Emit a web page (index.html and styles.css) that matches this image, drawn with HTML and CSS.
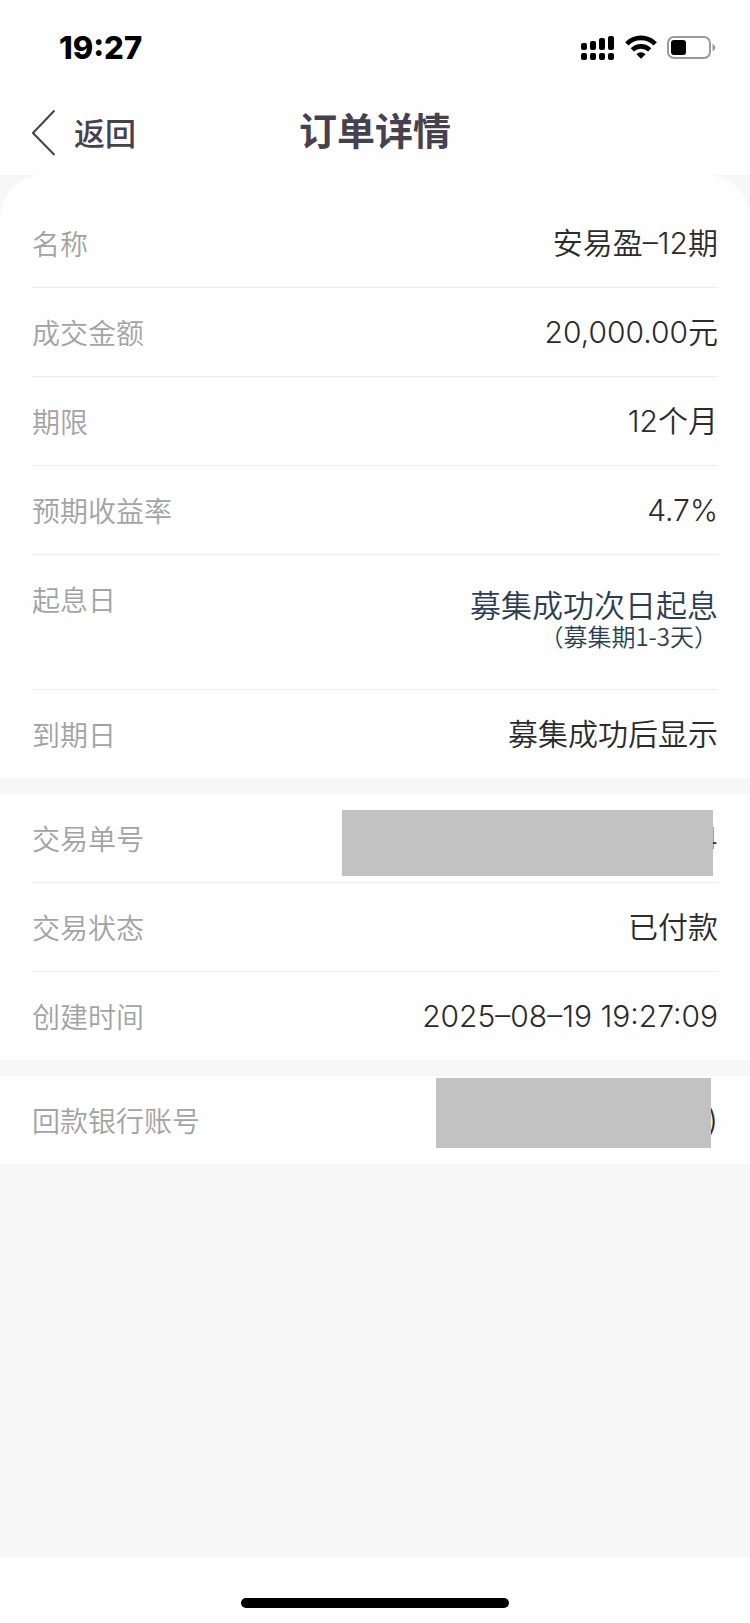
FILE: index.html
```html
<!DOCTYPE html>
<html lang="zh-CN">
<head>
<meta charset="utf-8">
<meta name="viewport" content="width=device-width, initial-scale=1">
<title>订单详情</title>
<link rel="stylesheet" href="styles.css">
</head>
<body>
<div class="status-bar">
  <span class="clock">19:27</span>
  <div class="status-icons">
    <svg width="34" height="26" viewBox="0 0 34 26" aria-hidden="true">
      <rect x="0" y="8" width="6" height="7" rx="2"/>
      <rect x="9" y="6" width="6" height="9" rx="2"/>
      <rect x="18" y="3" width="6" height="12" rx="2"/>
      <rect x="27" y="1" width="6" height="14" rx="2"/>
      <rect x="0" y="18" width="6" height="7" rx="2"/>
      <rect x="9" y="18" width="6" height="7" rx="2"/>
      <rect x="18" y="18" width="6" height="7" rx="2"/>
      <rect x="27" y="18" width="6" height="7" rx="2"/>
    </svg>
    <svg width="32" height="26" viewBox="0 0 32 26" aria-hidden="true">
      <g fill="none" stroke="#000" stroke-width="4.6">
        <path d="M1.800 8.800a20 20 0 0 1 28.400 0"/>
        <path d="M7.300 14.900a12.400 12.400 0 0 1 17.400 0"/>
      </g>
      <path d="M16 23.800l-4.600-4.600a6.600 6.600 0 0 1 9.200 0z"/>
    </svg>
    <svg width="49" height="26" viewBox="0 0 49 26" aria-hidden="true">
      <rect x="1" y="2" width="42" height="21" rx="6" fill="none" stroke="#999" stroke-width="2"/>
      <rect x="4" y="5" width="15" height="15" rx="3"/>
      <path d="M45.500 9c2 .6 2.800 2 2.800 3.500s-.8 2.900-2.800 3.500z" fill="#999"/>
    </svg>
  </div>
</div>
<header class="nav">
  <button class="back" type="button">
    <svg width="24" height="48" viewBox="0 0 24 48" fill="none" stroke="#45414f" stroke-width="2" aria-hidden="true"><path d="M22.500 2.500L1 25l21.500 22"/></svg>
    <span>返回</span>
  </button>
  <h1 class="title">订单详情</h1>
</header>
<main class="content">
  <dl class="card card-first">
    <div class="row"><dt>名称</dt><dd>安易盈–12期</dd></div>
    <div class="row"><dt>成交金额</dt><dd>20,000.00元</dd></div>
    <div class="row"><dt>期限</dt><dd>12个月</dd></div>
    <div class="row"><dt>预期收益率</dt><dd>4.7%</dd></div>
    <div class="row row-tall"><dt>起息日</dt><dd class="accrual"><span>募集成功次日起息</span><small>（募集期1-3天）</small></dd></div>
    <div class="row"><dt>到期日</dt><dd>募集成功后显示</dd></div>
  </dl>
  <dl class="card">
    <div class="row"><dt>交易单号</dt><dd class="masked">4<span class="mask mask-order"></span></dd></div>
    <div class="row"><dt>交易状态</dt><dd>已付款</dd></div>
    <div class="row"><dt>创建时间</dt><dd>2025–08–19 19:27:09</dd></div>
  </dl>
  <dl class="card">
    <div class="row"><dt>回款银行账号</dt><dd class="masked">)<span class="mask mask-account"></span></dd></div>
  </dl>
</main>
<footer class="home-area"><div class="home-bar"></div></footer>
</body>
</html>
```
FILE: styles.css
```css
* { box-sizing: border-box; }

body {
  margin: 0;
  min-height: 100vh;
  display: flex;
  flex-direction: column;
  background: #fefefe;
  color: #2b2b2b;
  font-family: Inter, "Noto Sans CJK SC", sans-serif;
}

.status-bar {
  display: flex;
  align-items: center;
  justify-content: space-between;
  height: 88px;
  padding: 8px 34px 0 59px;
  color: #000;
}
.clock { font-size: 31px; font-weight: 800; line-height: 36px; }
.status-icons { display: flex; align-items: center; gap: 10px; }
.status-icons svg { display: block; }

.nav {
  display: grid;
  grid-template-columns: 1fr auto 1fr;
  align-items: center;
  height: 87px;
  padding: 0 32px;
  color: #45414f;
}
.back {
  display: flex;
  align-items: center;
  justify-self: start;
  gap: 18px;
  padding: 0;
  border: 0;
  background: none;
  color: inherit;
  font: 500 31px/40px "Noto Sans CJK SC", sans-serif;
}
.title {
  margin: 0;
  padding-bottom: 6px;
  font: 700 38px/48px "Noto Sans CJK SC", sans-serif;
}

.content {
  flex: 1;
  display: flex;
  flex-direction: column;
  gap: 16px;
  background: #f7f7f7;
}
.card {
  margin: 0;
  padding: 0 32px;
  background: #fefefe;
}
.card-first {
  padding-top: 24px;
  border-radius: 44px 44px 0 0;
}
.row {
  display: flex;
  align-items: center;
  justify-content: space-between;
  min-height: 89px;
  border-bottom: 1px solid #ededed;
}
.row:last-child { min-height: 88px; border-bottom: 0; }
.row dt {
  padding-top: 4px;
  color: #a3a3a3;
  font-size: 28px;
  font-weight: 350;
  line-height: 40px;
}
.row dd {
  margin: 0;
  font-size: 30px;
  font-weight: 350;
  line-height: 40px;
  text-align: right;
}
.row-tall {
  align-items: flex-start;
  min-height: 135px;
  padding-top: 22px;
}
.row .accrual {
  display: flex;
  flex-direction: column;
  padding-top: 11px;
  color: #2c3e50;
  font-family: "Noto Sans CJK SC", sans-serif;
  font-size: 31px;
  line-height: 32px;
}
.accrual small { font-size: 24px; line-height: 32px; }

.row .masked { position: relative; }
.mask { position: absolute; background: #c2c2c2; }
.mask-order { top: -8px; right: 5px; width: 371px; height: 66px; }
.mask-account { top: -22px; right: 7px; width: 275px; height: 70px; }

.home-area {
  display: flex;
  justify-content: center;
  height: 66px;
  padding-top: 41px;
}
.home-bar {
  width: 268px;
  height: 10px;
  border-radius: 5px;
  background: #000;
}
```
